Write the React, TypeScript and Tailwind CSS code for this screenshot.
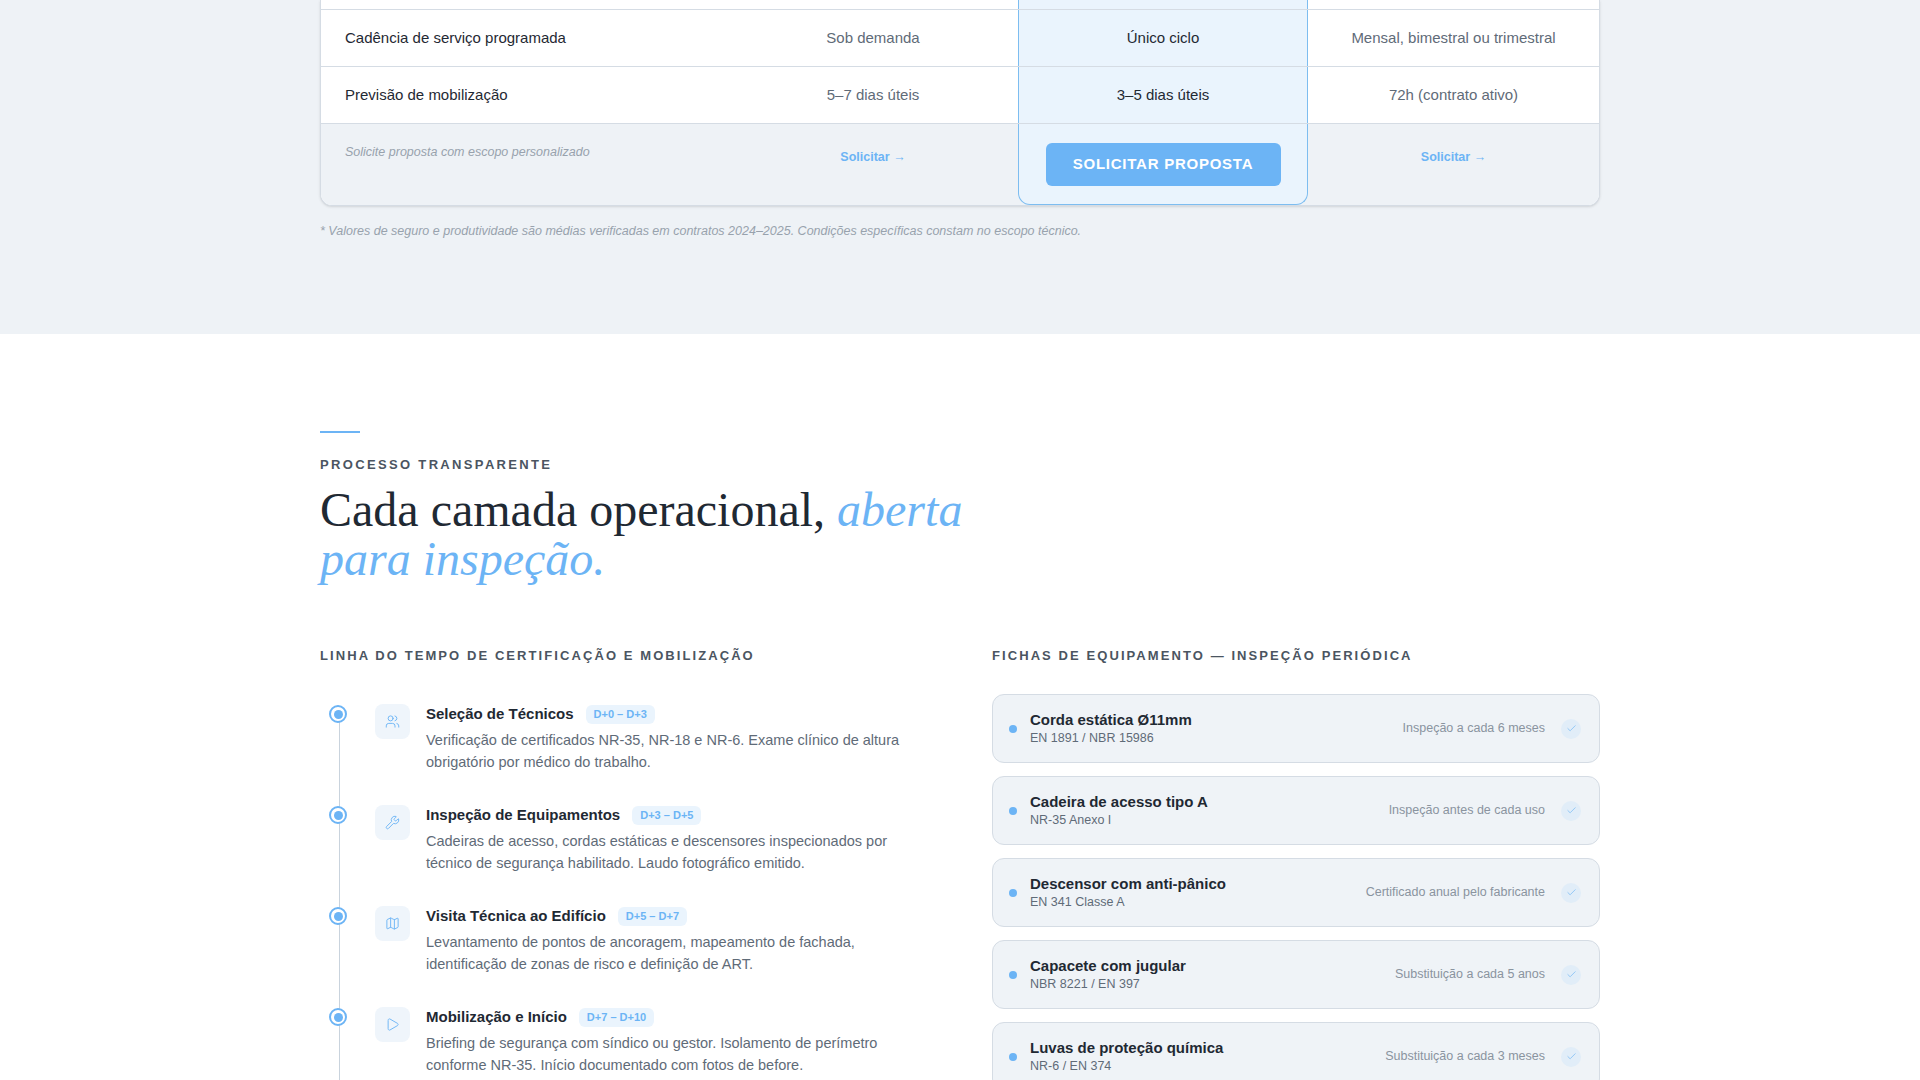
import React from 'react';
import { Users, Wrench, Map, Play, Check } from 'lucide-react';

const rows = [
  { label: 'Cadência de serviço programada', a: 'Sob demanda', b: 'Único ciclo', c: 'Mensal, bimestral ou trimestral' },
  { label: 'Previsão de mobilização', a: '5–7 dias úteis', b: '3–5 dias úteis', c: '72h (contrato ativo)' },
];

const steps = [
  { icon: Users, title: 'Seleção de Técnicos', tag: 'D+0 – D+3', text: 'Verificação de certificados NR-35, NR-18 e NR-6. Exame clínico de altura obrigatório por médico do trabalho.' },
  { icon: Wrench, title: 'Inspeção de Equipamentos', tag: 'D+3 – D+5', text: 'Cadeiras de acesso, cordas estáticas e descensores inspecionados por técnico de segurança habilitado. Laudo fotográfico emitido.' },
  { icon: Map, title: 'Visita Técnica ao Edifício', tag: 'D+5 – D+7', text: 'Levantamento de pontos de ancoragem, mapeamento de fachada, identificação de zonas de risco e definição de ART.' },
  { icon: Play, title: 'Mobilização e Início', tag: 'D+7 – D+10', text: 'Briefing de segurança com síndico ou gestor. Isolamento de perímetro conforme NR-35. Início documentado com fotos de before.' },
];

const gear = [
  { name: 'Corda estática Ø11mm', norm: 'EN 1891 / NBR 15986', freq: 'Inspeção a cada 6 meses' },
  { name: 'Cadeira de acesso tipo A', norm: 'NR-35 Anexo I', freq: 'Inspeção antes de cada uso' },
  { name: 'Descensor com anti-pânico', norm: 'EN 341 Classe A', freq: 'Certificado anual pelo fabricante' },
  { name: 'Capacete com jugular', norm: 'NBR 8221 / EN 397', freq: 'Substituição a cada 5 anos' },
  { name: 'Luvas de proteção química', norm: 'NR-6 / EN 374', freq: 'Substituição a cada 3 meses' },
];

const cols = 'grid grid-cols-[407px_290px_290px_1fr]';

export default function App() {
  return (
    <div className="h-[1080px] overflow-hidden bg-white text-[#1f2933]" style={{ fontFamily: '"Liberation Sans", Arial, sans-serif' }}>
      {/* comparison table tail */}
      <section className="bg-[#eef2f6] h-[334px]">
        <div className="mx-auto w-[1280px]">
          <div className="bg-white border-x border-b border-[#d5dce4] rounded-b-xl shadow-sm overflow-hidden">
            <div className={`${cols} h-[10px] border-b border-[#d5dce4]`}>
              <div /><div />
              <div className="bg-[#eaf4fd] border-x border-[#7dbdf0]" /><div />
            </div>
            {rows.map((r) => (
              <div key={r.label} className={`${cols} h-[57px] border-b border-[#d5dce4] text-[15px] items-stretch`}>
                <div className="flex items-center pl-6 text-[#1f2933]">{r.label}</div>
                <div className="flex items-center justify-center text-[#5f6b78]">{r.a}</div>
                <div className="flex items-center justify-center bg-[#eaf4fd] border-x border-[#7dbdf0] text-[#1f2933]">{r.b}</div>
                <div className="flex items-center justify-center text-[#5f6b78]">{r.c}</div>
              </div>
            ))}
            <div className={`${cols} h-[81px] bg-[#eef2f6]`}>
              <div className="pl-6 pt-[19px] text-[12.5px] italic text-[#98a2ad]">Solicite proposta com escopo personalizado</div>
              <div className="flex justify-center pt-[24px] text-[12.5px] font-bold text-[#6cb4f5]">Solicitar →</div>
              <div className="flex justify-center pt-[19px] bg-[#eaf4fd] border-x border-b border-[#7dbdf0] rounded-b-xl">
                <button className="h-[43px] w-[235px] rounded-md bg-[#6cb4f5] text-white text-[15px] font-bold tracking-wider">SOLICITAR PROPOSTA</button>
              </div>
              <div className="flex justify-center pt-[24px] text-[12.5px] font-bold text-[#6cb4f5]">Solicitar →</div>
            </div>
          </div>
          <p className="mt-4 text-[12.5px] italic text-[#98a2ad]">* Valores de seguro e produtividade são médias verificadas em contratos 2024–2025. Condições específicas constam no escopo técnico.</p>
        </div>
      </section>

      <section className="mx-auto w-[1280px] pt-[97px]">
        <div className="w-10 h-[2px] bg-[#6cb4f5]" />
        <div className="mt-[22px] text-[13px] font-bold tracking-[0.18em] text-[#4b5561]">PROCESSO TRANSPARENTE</div>
        <h2 className="mt-[10px] text-[48px] leading-[49px] text-[#1f2933]" style={{ fontFamily: '"Liberation Serif", "Times New Roman", serif' }}>
          Cada camada operacional, <em className="text-[#6cb4f5]">aberta<br />para inspeção.</em>
        </h2>

        <div className="mt-[63px] grid grid-cols-2 gap-16">
          <div>
            <div className="text-[13px] font-bold tracking-[0.16em] text-[#4b5561]">LINHA DO TEMPO DE CERTIFICAÇÃO E MOBILIZAÇÃO</div>
            <div className="relative mt-[38px] pl-[55px]">
              <div className="absolute left-[19px] top-[10px] h-[400px] w-px bg-[#c9d3dd]" />
              {steps.map((s) => (
                <div key={s.title} className="relative flex gap-4 h-[101px]">
                  <div className="absolute -left-[46px] top-[2px] h-[18px] w-[18px] rounded-full border-2 border-[#6cb4f5] bg-white flex items-center justify-center">
                    <div className="h-[9px] w-[9px] rounded-full bg-[#6cb4f5]" />
                  </div>
                  <div className="h-[35px] w-[35px] shrink-0 rounded-lg bg-[#eff5fb] flex items-center justify-center mt-[1px]">
                    <s.icon size={15} strokeWidth={1.5} className="text-[#6cb4f5]" />
                  </div>
                  <div>
                    <div className="flex items-center gap-3">
                      <span className="text-[15px] font-bold text-[#1f2933]">{s.title}</span>
                      <span className="rounded-md bg-[#eaf4fd] px-2 py-[1px] text-[11px] font-bold text-[#6cb4f5]">{s.tag}</span>
                    </div>
                    <p className="mt-[3px] w-[505px] text-[14.5px] leading-[22.5px] text-[#5f6b78]">{s.text}</p>
                  </div>
                </div>
              ))}
            </div>
          </div>

          <div>
            <div className="text-[13px] font-bold tracking-[0.16em] text-[#4b5561]">FICHAS DE EQUIPAMENTO — INSPEÇÃO PERIÓDICA</div>
            <div className="mt-[29px] flex flex-col gap-[13px]">
              {gear.map((g) => (
                <div key={g.name} className="h-[69px] shrink-0 rounded-xl border border-[#d5dce4] bg-[#eff3f7] flex items-center pl-4 pr-[18px]">
                  <div className="h-2 w-2 rounded-full bg-[#6cb4f5]" />
                  <div className="ml-[13px] flex-1">
                    <div className="text-[15px] font-bold leading-[19px] text-[#1f2933]">{g.name}</div>
                    <div className="text-[12.5px] text-[#5f6b78]">{g.norm}</div>
                  </div>
                  <span className="text-[12.5px] text-[#8a949f]">{g.freq}</span>
                  <div className="ml-4 h-[20px] w-[20px] rounded-full bg-[#e1edf8] flex items-center justify-center">
                    <Check size={11} strokeWidth={2} className="text-[#8cc4f5]" />
                  </div>
                </div>
              ))}
            </div>
          </div>
        </div>
      </section>
    </div>
  );
}
